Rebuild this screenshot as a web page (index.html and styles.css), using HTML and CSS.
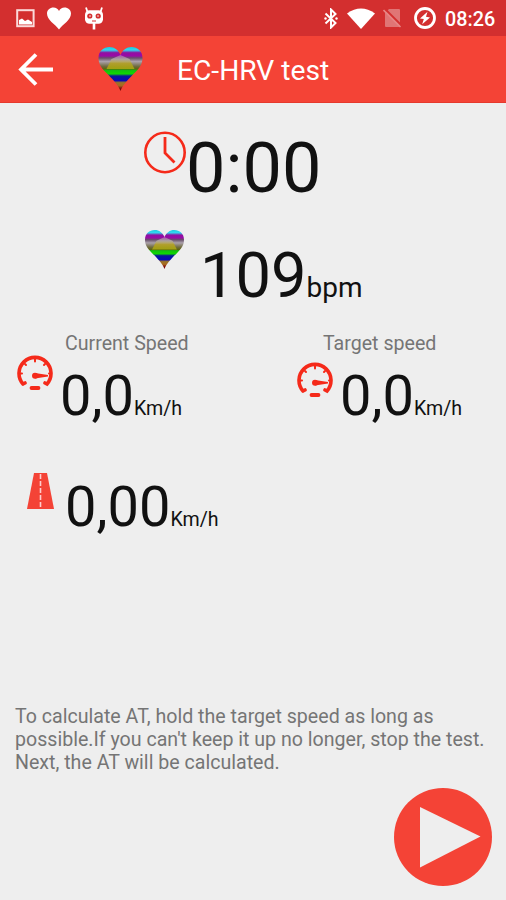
FILE: index.html
```
<!DOCTYPE html>
<html lang="en">
<head>
    <meta charset="UTF-8">
    <meta name="viewport" content="width=device-width, initial-scale=1.0">
    <title>EC-HRV test</title>
    <link rel="stylesheet" href="styles.css">
</head>
<body>
    <svg class="defs" width="0" height="0">
        <defs>
            <linearGradient id="rainbow" x1="0" y1="0" x2="0" y2="1">
                <stop offset="0" stop-color="#20c8e0"/>
                <stop offset="0.07" stop-color="#30d8f0"/>
                <stop offset="0.13" stop-color="#9010a0"/>
                <stop offset="0.2" stop-color="#9a08a8"/>
                <stop offset="0.25" stop-color="#67506a"/>
                <stop offset="0.33" stop-color="#aaa0aa"/>
                <stop offset="0.44" stop-color="#706c40"/>
                <stop offset="0.5" stop-color="#5c6410"/>
                <stop offset="0.53" stop-color="#10c010"/>
                <stop offset="0.61" stop-color="#10d800"/>
                <stop offset="0.66" stop-color="#0a1898"/>
                <stop offset="0.76" stop-color="#0808b8"/>
                <stop offset="0.81" stop-color="#9a7428"/>
                <stop offset="0.88" stop-color="#a86820"/>
                <stop offset="0.94" stop-color="#801010"/>
                <stop offset="1" stop-color="#700000"/>
            </linearGradient>
            <linearGradient id="facet" x1="0" y1="0" x2="0" y2="1">
                <stop offset="0" stop-color="#b060b8"/>
                <stop offset="0.3" stop-color="#b8b0a8"/>
                <stop offset="0.6" stop-color="#b8a418"/>
                <stop offset="1" stop-color="#b0b010"/>
            </linearGradient>
            <symbol id="heart" viewBox="0 0 44 44">
                <path d="M22 44C20 38 13 31 7 25C2 20 0 16 0 11C0 4 5 0 11 0C16 0 20 3 22 8C24 3 28 0 33 0C39 0 44 4 44 11C44 16 42 20 37 25C31 31 24 38 22 44Z" fill="url(#rainbow)"/>
                <path d="M22 8L31 12L36 22H8L13 12Z" fill="url(#facet)" opacity="0.8"/>
            </symbol>
            <symbol id="gauge" viewBox="0 0 36 36">
                <g fill="none" stroke="#f52a1a" stroke-linecap="round">
                    <path d="M6 29A16 16 0 1 1 30 29L28 28M6 29L8 28" stroke-width="3.600"/>
                    <path d="M18 3V6.500M8 9L9 10M28 9L27 10M3 18.500H5M33 18.500H32" stroke-width="2"/>
                    <path d="M14.500 33H21.500" stroke-width="3.800"/>
                </g>
                <path d="M18 18L31 20V21.500L18 23.500Z" fill="#f52a1a"/>
                <circle cx="18" cy="20.800" r="3" fill="#f52a1a"/>
            </symbol>
        </defs>
    </svg>

    <div class="status-bar">
        <div class="notifications">
            <svg width="19" height="19" viewBox="0 0 19 19">
                <rect x="1.200" y="1.200" width="16.400" height="16" fill="none" stroke="#fbdada" stroke-width="2"/>
                <path d="M3 15.500V11L6 9.500L9 12L12 10.500L16 13V15.500Z" fill="#fff"/>
            </svg>
            <svg class="like" width="24" height="23" viewBox="0 0 24 23">
                <path d="M12 22.500C8 17 0 13 0 6.500C0 3 3 .5 6.500 .5C9 .5 11 2 12 4C13 2 15 .5 17.500 .5C21 .5 24 3 24 6.500C24 13 16 17 12 22.500Z" fill="#fff"/>
            </svg>
            <svg class="cid" width="20" height="23" viewBox="0 0 20 23">
                <path d="M2 .5L3.500 5M18 .5L16.500 5" stroke="#fff" stroke-width="1.800"/>
                <rect x="1" y="3.200" width="18" height="13.600" rx="4.500" fill="#fff"/>
                <path d="M10 16V22.500" stroke="#fff" stroke-width="2.600"/>
                <circle cx="5.800" cy="9" r="2.600" fill="#d32f2f"/>
                <circle cx="14.200" cy="9" r="2.600" fill="#d32f2f"/>
                <circle cx="6" cy="9" r=".8" fill="#fff"/>
                <circle cx="14" cy="9" r=".8" fill="#fff"/>
                <path d="M8 14H12" stroke="#d32f2f"/>
            </svg>
        </div>
        <div class="system">
            <svg width="14" height="21" viewBox="0 0 14 21">
                <path d="M1.500 5.500L11.500 15L7 19.500V1.500L11.500 6L1.500 15.500" fill="none" stroke="#fff" stroke-width="2"/>
                <circle cx="1.500" cy="10.500" r="1.200" fill="#fff"/>
                <circle cx="12.500" cy="10.500" r="1.200" fill="#fff"/>
            </svg>
            <svg class="wifi" width="28" height="21" viewBox="0 0 28 21">
                <path d="M0 5.500Q14 -4.500 28 5.500L14 21Z" fill="#fff"/>
            </svg>
            <svg class="no-sim" width="19" height="20" viewBox="0 0 19 20">
                <path d="M6 1H16Q17 1 17 2V19H3Q2 19 2 18V5Z" fill="#e07575"/>
                <path d="M1.500 .5L19 18" stroke="#d32f2f" stroke-width="2"/>
                <path d="M.5 2L17.500 19" stroke="#e88585" stroke-width="1.600"/>
            </svg>
            <svg class="battery" width="22" height="22" viewBox="0 0 22 22">
                <circle cx="11" cy="11" r="9.500" fill="none" stroke="#fff" stroke-width="2.800"/>
                <path d="M13.500 4.800L6 11.500L9.800 12L8.200 17.200L16 10.500L12 9.800Z" fill="#fff"/>
            </svg>
            <span class="clock">08:26</span>
        </div>
    </div>

    <div class="toolbar">
        <svg width="35" height="33" viewBox="0 0 35 33">
            <path d="M18 1.500L3 16.500L18 31.500M3 16.500H35" fill="none" stroke="#fff" stroke-width="3.800"/>
        </svg>
        <svg class="logo" width="45" height="44"><use href="#heart"/></svg>
        <h1>EC-HRV test</h1>
    </div>

    <div class="content">
        <div class="row timer">
            <svg width="42" height="43" viewBox="0 0 42 43">
                <circle cx="21" cy="21.500" r="19.700" fill="none" stroke="#f52a1a" stroke-width="2.600"/>
                <path d="M21 6V22L30.500 31.500" fill="none" stroke="#f52a1a" stroke-width="2.800"/>
            </svg>
            <span class="value">0:00</span>
        </div>

        <div class="row pulse">
            <svg width="39" height="39"><use href="#heart"/></svg>
            <span class="value">109</span><span class="unit">bpm</span>
        </div>

        <div class="speeds">
            <div class="speed">
                <div class="label">Current Speed</div>
                <div class="row">
                    <svg class="gauge current" width="36" height="36"><use href="#gauge"/></svg>
                    <span class="value">0,0</span><span class="unit">Km/h</span>
                </div>
            </div>
            <div class="speed target">
                <div class="label">Target speed</div>
                <div class="row">
                    <svg class="gauge" width="36" height="36"><use href="#gauge"/></svg>
                    <span class="value">0,0</span><span class="unit">Km/h</span>
                </div>
            </div>
        </div>

        <div class="row distance">
            <svg width="27" height="36" viewBox="0 0 27 36">
                <path d="M7 0H20L27 36H0Z" fill="#f44336"/>
                <path d="M13.500 1V36" stroke="#fcc" stroke-width="1.600" stroke-dasharray="5 2"/>
            </svg>
            <span class="value">0,00</span><span class="unit">Km/h</span>
        </div>

        <p class="hint">To calculate AT, hold the target speed as long as possible.If you can't keep it up no longer, stop the test. Next, the AT will be calculated.</p>

        <button type="button" class="start" aria-label="Start">
            <svg width="98" height="98" viewBox="0 0 98 98">
                <circle cx="49" cy="49" r="49" fill="#f44336"/>
                <path d="M26 19L86.500 48.500L26 79.500Z" fill="#eee"/>
            </svg>
        </button>
    </div>
</body>
</html>
```
FILE: styles.css
```
* {
    box-sizing: border-box;
}
body {
    margin: 0;
    height: 900px;
    overflow: hidden;
    font-family: Roboto, sans-serif;
    background-color: #eee;
    color: #111;
    display: flex;
    flex-direction: column;
}
svg {
    display: block;
    flex: none;
}
.defs {
    position: absolute;
}
.status-bar {
    height: 36px;
    padding: 0 11px 0 16px;
    background-color: #d32f2f;
    color: #fff;
    display: flex;
    justify-content: space-between;
}
.notifications,
.system {
    display: flex;
    align-items: center;
}
.like {
    margin-left: 12px;
}
.cid {
    margin-left: 13px;
}
.wifi {
    margin-left: 9px;
}
.no-sim {
    margin-left: 8px;
}
.battery {
    margin-left: 12px;
}
.clock {
    width: 50px;
    margin-left: 9px;
    padding-top: 2px;
    font-size: 19.8px;
    font-weight: 500;
    white-space: nowrap;
}
.toolbar {
    height: 67px;
    padding-left: 18px;
    background-color: #f44336;
    border-bottom: 1px solid #e5392d;
    color: #fff;
    display: flex;
    align-items: center;
}
.logo {
    margin-left: 45px;
}
h1 {
    margin: 0 0 0 34px;
    padding-top: 2px;
    font-size: 28.2px;
    font-weight: 400;
}
.content {
    flex: 1;
    display: flex;
    flex-direction: column;
    padding: 23px 14px 14px 15px;
}
.row {
    display: flex;
    align-items: baseline;
}
.row svg {
    align-self: flex-start;
}
.value {
    line-height: 66px;
    font-size: 56px;
}
.unit {
    font-size: 19.6px;
    line-height: 24px;
}
.timer {
    height: 104px;
    padding-left: 129px;
}
.timer svg {
    margin-top: 5px;
}
.timer .value {
    font-size: 70.2px;
    line-height: 84px;
}
.pulse {
    height: 102px;
    padding: 8px 0 0 130px;
}
.pulse svg {
    margin: -8px 16px 0 0;
}
.pulse .value {
    font-size: 63.2px;
    line-height: 75px;
}
.pulse .unit {
    font-size: 28px;
}
.speeds {
    height: 142px;
    display: flex;
}
.speed {
    width: 280px;
    flex: none;
    padding-left: 2px;
}
.speed.target {
    width: 190px;
}
.label {
    height: 31px;
    padding-left: 48px;
    font-size: 19.6px;
    line-height: 23px;
    color: #757575;
}
.target .label {
    padding-left: 26px;
}
.gauge {
    margin: -1px 7px 0 0;
}
.gauge.current {
    margin-top: -8px;
}
.distance {
    height: 231px;
    padding-left: 12px;
}
.distance svg {
    margin: -1px 11px 0 0;
}
.hint {
    margin: 0;
    font-size: 19.6px;
    line-height: 23px;
    color: #757575;
}
.start {
    margin: auto 0 0 auto;
    padding: 0;
    border: none;
    background: none;
    cursor: pointer;
}
```
